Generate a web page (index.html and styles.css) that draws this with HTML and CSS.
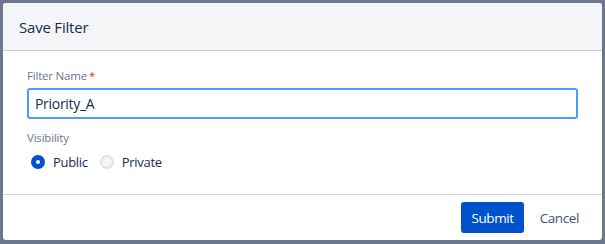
FILE: index.html
```html
<!DOCTYPE html>
<html lang="en">
<head>
    <meta charset="UTF-8">
    <meta name="viewport" content="width=device-width, initial-scale=1.0">
    <title>Save Filter</title>
    <link rel="stylesheet" href="styles.css">
</head>
<body>
    <div class="dialog">
        <div class="dialog-header">Save Filter</div>
        <div class="dialog-body">
            <label class="field-label" for="filtername">Filter Name<span class="required">*</span></label>
            <input id="filtername" class="text-input" type="text" value="Priority_A" spellcheck="false">
            <div class="field-label visibility-label">Visibility</div>
            <div class="radio-group">
                <label class="radio">
                    <span class="radio-dot checked"></span>
                    Public
                </label>
                <label class="radio">
                    <span class="radio-dot"></span>
                    Private
                </label>
            </div>
        </div>
        <div class="dialog-footer">
            <button class="btn btn-primary">Submit</button>
            <button class="btn btn-subtle">Cancel</button>
        </div>
    </div>
</body>
</html>
```

FILE: styles.css
```css
body {
    margin: 0;
    padding: 3px;
    background-color: #6B778C;
    font-family: 'Open Sans', sans-serif;
    color: #172B4D;
}
.dialog {
    width: 599px;
    height: 237px;
    box-sizing: border-box;
    background-color: #FFF;
    border-radius: 3px;
    display: flex;
    flex-direction: column;
    overflow: hidden;
}
.dialog-header {
    height: 48px;
    box-sizing: border-box;
    border-bottom: 1px solid #C8CBD0;
    background-color: #F4F5F7;
    padding: 0 16px;
    display: flex;
    align-items: center;
    font-size: 15px;
    letter-spacing: -0.2px;
}
.dialog-body {
    padding: 17px 24px 0 24px;
    flex: 1;
    border-bottom: 1px solid #D3D5D9;
}
.field-label {
    display: block;
    font-size: 11.5px;
    color: #6B778C;
    height: 16px;
    line-height: 16px;
    letter-spacing: -0.2px;
}
.required {
    color: #DE350B;
    margin-left: 2px;
}
.text-input {
    display: block;
    width: 100%;
    height: 31px;
    box-sizing: border-box;
    margin-top: 4px;
    border: 2px solid #4C9AFF;
    border-radius: 3px;
    outline: none;
    padding: 0 6px;
    font-family: inherit;
    font-size: 14px;
    letter-spacing: -0.3px;
    color: #172B4D;
}
.visibility-label {
    margin-top: 11px;
}
.radio-group {
    display: flex;
    gap: 8px;
    margin-top: 7px;
}
.radio {
    display: flex;
    align-items: center;
    gap: 8px;
    font-size: 13px;
    letter-spacing: -0.3px;
    padding-left: 4px;
}
.radio-dot {
    width: 14px;
    height: 14px;
    box-sizing: border-box;
    border-radius: 50%;
    border: 2px solid #DFE1E6;
    background-color: #F4F5F7;
}
.radio-dot.checked {
    border: 5px solid #0052CC;
    background-color: #FFF;
}
.dialog-footer {
    height: 45px;
    display: flex;
    justify-content: flex-end;
    align-items: center;
    padding: 0 11px 0 16px;
    gap: 4px;
}
.btn {
    border: none;
    border-radius: 3px;
    height: 31px;
    padding: 0 12px;
    font-family: inherit;
    font-size: 13.5px;
    letter-spacing: -0.4px;
    cursor: pointer;
}
.btn-primary {
    background-color: #0052CC;
    color: #FFF;
    padding: 0 10px;
}
.btn-subtle {
    background-color: transparent;
    color: #42526E;
}
```
